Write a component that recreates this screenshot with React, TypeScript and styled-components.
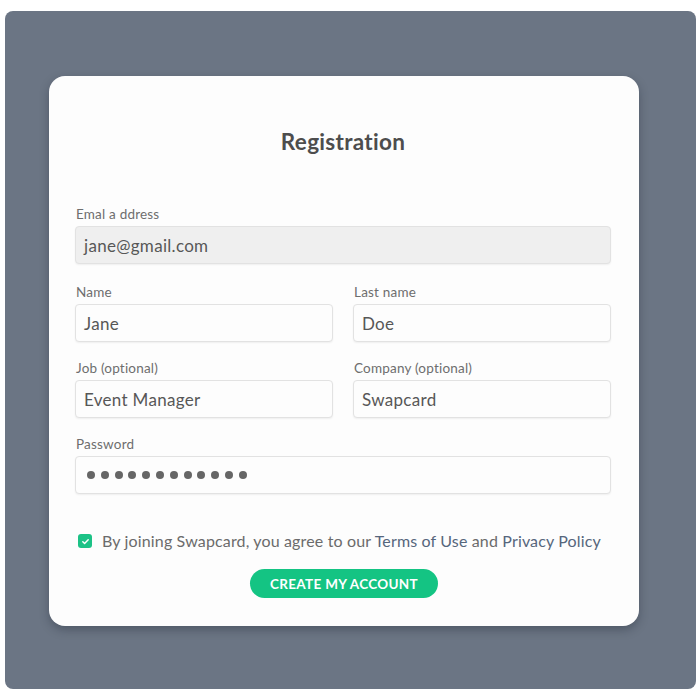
import React from "react";
import styled, { createGlobalStyle } from "styled-components";

const GlobalStyle = createGlobalStyle`
  html, body {
    margin: 0;
    padding: 0;
    background: #ffffff;
  }
  body {
    font-family: Lato, "Open Sans", sans-serif;
  }
`;

const Backdrop = styled.div`
  box-sizing: border-box;
  width: 691px;
  height: 678px;
  margin: 11px 0 0 5px;
  padding: 65px 57px 63px 44px;
  background: #6b7584;
  border-radius: 8px;
`;

const Card = styled.div`
  box-sizing: border-box;
  width: 590px;
  height: 550px;
  padding: 54px 28px 28px 26px;
  background: #fdfdfd;
  border-radius: 16px;
  box-shadow: 0 4px 10px rgba(30, 36, 48, 0.35);
  display: flex;
  flex-direction: column;
`;

const Title = styled.h1`
  margin: 0 0 52px;
  text-align: center;
  font-size: 22.5px;
  line-height: 24px;
  font-weight: 700;
  letter-spacing: 0.3px;
  color: #4d4d4d;
`;

const Row = styled.div<{ $cols?: number; $gap?: number }>`
  display: grid;
  grid-template-columns: ${(p) => (p.$cols === 2 ? "1fr 1fr" : "1fr")};
  column-gap: 20px;
  margin-bottom: ${(p) => p.$gap ?? 18}px;
`;

const Group = styled.div`
  display: flex;
  flex-direction: column;
`;

const Label = styled.label`
  font-size: 13.5px;
  line-height: 16px;
  letter-spacing: 0.2px;
  color: #6e6e6e;
  margin: 0 0 4px 1px;
`;

const Box = styled.div<{ $muted?: boolean }>`
  box-sizing: border-box;
  height: 38px;
  display: flex;
  align-items: center;
  padding: 0 8px;
  border: 1px solid #e2e2e2;
  border-radius: 4px;
  background: ${(p) => (p.$muted ? "#efefef" : "#fdfdfd")};
  box-shadow: 0 1px 2px rgba(0, 0, 0, 0.06);
  font-size: 17px;
  letter-spacing: 0.3px;
  color: #575757;
`;

const Dots = styled.div`
  display: flex;
  gap: 5.8px;
  padding-left: 3px;
`;

const Dot = styled.span`
  width: 8px;
  height: 8px;
  border-radius: 50%;
  background: #666666;
`;

const Agree = styled.div`
  display: flex;
  align-items: center;
  gap: 10px;
  margin: 36px 0 17px 3px;
  font-size: 16px;
  line-height: 22px;
  letter-spacing: 0.15px;
  color: #6b6b6b;
`;

const Check = styled.span`
  flex-shrink: 0;
  width: 14px;
  height: 14px;
  border-radius: 3px;
  background: #1cc286;
  display: flex;
  align-items: center;
  justify-content: center;
`;

const Link = styled.a`
  color: #56667c;
  text-decoration: none;
`;

const Submit = styled.button`
  flex-shrink: 0;
  align-self: center;
  width: 188px;
  height: 29px;
  margin-left: 2px;
  border: none;
  border-radius: 15px;
  background: #14c483;
  color: #ffffff;
  font-family: Lato, sans-serif;
  font-size: 13.5px;
  font-weight: 700;
  letter-spacing: 0.3px;
  text-transform: uppercase;
  cursor: pointer;
`;

const App = () => {
  return (
    <>
      <GlobalStyle />
      <Backdrop>
        <Card>
          <Title>Registration</Title>
          <Row $gap={20}>
            <Group>
              <Label>Emal a ddress</Label>
              <Box $muted>jane@gmail.com</Box>
            </Group>
          </Row>
          <Row $cols={2}>
            <Group>
              <Label>Name</Label>
              <Box>Jane</Box>
            </Group>
            <Group>
              <Label>Last name</Label>
              <Box>Doe</Box>
            </Group>
          </Row>
          <Row $cols={2}>
            <Group>
              <Label>Job (optional)</Label>
              <Box>Event Manager</Box>
            </Group>
            <Group>
              <Label>Company (optional)</Label>
              <Box>Swapcard</Box>
            </Group>
          </Row>
          <Row $gap={0}>
            <Group>
              <Label>Password</Label>
              <Box>
                <Dots>
                  {Array.from({ length: 12 }).map((_, i) => (
                    <Dot key={i} />
                  ))}
                </Dots>
              </Box>
            </Group>
          </Row>
          <Agree>
            <Check>
              <svg width="9" height="9" viewBox="0 0 10 10" fill="none">
                <path
                  d="M2 5.2l2 2L8 3"
                  stroke="#fff"
                  strokeWidth="1.6"
                  strokeLinecap="round"
                  strokeLinejoin="round"
                />
              </svg>
            </Check>
            <span>
              By joining Swapcard, you agree to our <Link>Terms of Use</Link> and{" "}
              <Link>Privacy Policy</Link>
            </span>
          </Agree>
          <Submit>Create my account</Submit>
        </Card>
      </Backdrop>
    </>
  );
};

export default App;
